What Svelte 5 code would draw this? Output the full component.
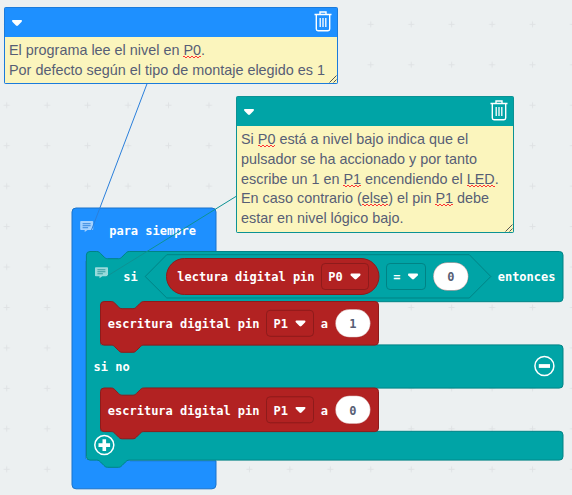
<script>
  const notch = 'c1.8 0 2.7 .9 3.6 1.8l3.6 3.6c.9 .9 1.8 1.8 3.6 1.8h10.8c1.8 0 2.7 -.9 3.6 -1.8l3.6 -3.6c.9 -.9 1.8 -1.8 3.6 -1.8';
  const tab = 'c-1.8 0 -2.7 .9 -3.6 1.8l-3.6 3.6c-.9 .9 -1.8 1.8 -3.6 1.8h-10.8c-1.8 0 -2.7 -.9 -3.6 -1.8l-3.6 -3.6c-.9 -.9 -1.8 -1.8 -3.6 -1.8';

  const comments = [
    {
      id: 'loop',
      lines: [
        [['El programa lee el nivel en '], ['P0', true], ['.']],
        [['Por defecto según el tipo de montaje elegido es 1']]
      ]
    },
    {
      id: 'logic',
      lines: [
        [['Si '], ['P0', true], [' está a nivel bajo indica que el']],
        [['pulsador se ha accionado y por tanto']],
        [['escribe un 1 en '], ['P1', true], [' encendiendo el '], ['LED', true], ['.']],
        [['En caso contrario ('], ['else', true], [') el pin '], ['P1', true], [' debe']],
        [['estar en nivel lógico bajo.']]
      ]
    }
  ];

  const writes = [
    { y: 301.5, value: '1' },
    { y: 388, value: '0' }
  ];
</script>

{#snippet caret(x, y)}
  <path class="caret" d="M{x - .3} {y}h8.2q1.6 .3 .6 1.8l-3.7 3.7q-1 .9 -2 0l-3.7 -3.7q-1 -1.5 .6 -1.8z" />
{/snippet}

{#snippet note(x, y, line)}
  <g transform="translate({x} {y})">
    <path fill="#fff" fill-opacity=".6" d="M.8 0h11.4q.8 0 .8 .8v7.4q0 .8 -.8 .8h-4.9l-2.8 2v-2h-3.7q-.8 0 -.8 -.8v-7.4q0 -.8 .8 -.8z" />
    <path stroke={line} stroke-width="1.1" opacity=".65" d="M2.4 2.6h8M2.4 4.6h8M2.4 6.6h5.5" />
  </g>
{/snippet}

<main>
  <svg class="canvas" width="572" height="495" viewBox="0 0 572 495">
    <defs>
      <pattern id="grid" x="-13.5" y="4.1" width="40.45" height="40.45" patternUnits="userSpaceOnUse">
        <path d="M17.2 20.2h6M20.2 17.2v6" stroke="#dfe2e4" stroke-width="1" />
      </pattern>
    </defs>
    <rect width="572" height="495" fill="url(#grid)" />

    <path class="blue" d="M72 212q0 -4 4 -4h136q4 0 4 4v39.5h-130v209.3h130v24q0 4 -4 4h-136q-4 0 -4 -4z" />
    <path class="blue-fill" d="M84 251h46v10h-46zM84 459h46v10h-46z" />
    <text x="109.2" y="234.7">para siempre</text>

    <path
      class="teal"
      d="M86.4 255.1q0 -3.6 3.6 -3.6h6.8{notch}H559.4q3.6 0 3.6 3.6v43q0 3.6 -3.6 3.6H100.5v43.2H559.4q3.6 0 3.6 3.6v36q0 3.6 -3.6 3.6H100.5v43.2H559.4q3.6 0 3.6 3.6v21.6q0 3.6 -3.6 3.6H129.2{tab}H90q-3.6 0 -3.6 -3.6z"
    />
    <path class="teal" d="M145.2 276.5L166.8 254.7H469.3L490.8 276.5L469.3 298H166.8z" />
    <text x="123.3" y="281">si</text>
    <text x="497.7" y="281">entonces</text>
    <text x="93.6" y="371">si no</text>

    <rect class="red" x="166.5" y="258.5" width="212.5" height="36" rx="18" />
    <text x="177.3" y="281">lectura digital pin</text>
    <rect class="red" x="321.5" y="263.5" width="47" height="26" rx="3.6" />
    <text x="328.3" y="281">P0</text>
    {@render caret(351.7, 273.6)}
    <rect class="teal" x="386.5" y="263.5" width="39" height="26" rx="3.6" />
    <text x="393.3" y="281">=</text>
    {@render caret(409.2, 273.6)}
    <rect class="value" x="433.3" y="262.5" width="35" height="28" rx="14" />
    <text class="number" x="447.2" y="281">0</text>

    {#each writes as block}
      <g transform="translate(100.5 {block.y})">
        <rect class="teal-fill" x="-1" y="-1" width="46" height="10" />
        <path class="red" d="M0 3.6q0 -3.6 3.6 -3.6h7.2{notch}H274.4q3.6 0 3.6 3.6v36.4q0 3.6 -3.6 3.6H43.2{tab}H3.6q-3.6 0 -3.6 -3.6z" />
        <text x="7.3" y="26.5">escritura digital pin</text>
        <rect class="red" x="166" y="8.8" width="47" height="26" rx="3.6" />
        <text x="173" y="26.5">P1</text>
        {@render caret(196.2, 19)}
        <text x="220.2" y="26.5">a</text>
        <rect class="value" x="234.9" y="7.8" width="35" height="28" rx="14" />
        <text class="number" x="248.8" y="26.5">{block.value}</text>
      </g>
    {/each}

    <g fill="none" stroke="#fff">
      <circle cx="104.3" cy="445.1" r="9.5" stroke-width="1.5" />
      <path stroke-width="3.6" d="M98.5 445.1h11.6M104.3 439.3v11.6" />
      <circle cx="544.4" cy="366" r="9.5" stroke-width="1.5" />
      <path stroke-width="3.8" d="M538.8 366h11.2" />
    </g>

    {@render note(80.2, 221, '#1e78d8')}
    {@render note(95, 267.2, '#007f82')}
    <path class="link" stroke="#2a7fdb" d="M147.3 83L91.5 230" />
    <path class="link" stroke="#0d9293" d="M237 195.8L106.5 276.5" />
  </svg>

  {#each comments as comment}
    <section class="comment {comment.id}">
      <header>
        <svg width="12" height="8" viewBox="0 0 12 8">{@render caret(2.2, 1)}</svg>
        <svg width="18" height="21" viewBox="0 0 18 21" fill="none" stroke="#fff">
          <path stroke-width="1.4" d="M.5 3.5h17M6 3.2v-2.2h6v2.2M2.3 3.8v14.2q0 1.7 1.7 1.7h10q1.7 0 1.7 -1.7v-14.2" />
          <path stroke-width="1.3" d="M6.2 7v9M9 7v9M11.8 7v9" />
        </svg>
      </header>
      <div class="body">
        {#each comment.lines as line}
          <p>{#each line as [part, misspelt]}<span class:misspelt>{part}</span>{/each}</p>
        {/each}
        <svg class="grip" width="8" height="8" viewBox="0 0 8 8">
          <path stroke="#555" stroke-width="1" d="M.5 7.5l7 -7M4.5 7.5l3 -3" />
        </svg>
      </div>
    </section>
  {/each}
</main>

<style>
  :global(body) {
    margin: 0;
    background: #ecf0f1;
  }
  main {
    position: relative;
    width: 572px;
    height: 495px;
    overflow: hidden;
    background: #ecf0f1;
  }
  .canvas {
    display: block;
  }
  text {
    font: bold 12px 'DejaVu Sans Mono', monospace;
    fill: #fff;
    white-space: pre;
  }
  .number {
    fill: #575e75;
  }
  .blue {
    fill: #1e90ff;
    stroke: #1873cc;
  }
  .blue-fill {
    fill: #1e90ff;
  }
  .teal {
    fill: #00a4a6;
    stroke: #008385;
  }
  .teal-fill {
    fill: #00a4a6;
  }
  .red {
    fill: #b22222;
    stroke: #8e1b1b;
  }
  .value,
  .caret {
    fill: #fff;
  }
  .value {
    stroke: #8e1b1b;
    stroke-opacity: 0.25;
  }
  .link {
    stroke-width: 1;
  }
  .comment {
    position: absolute;
    box-sizing: border-box;
    display: flex;
    flex-direction: column;
    border: 1px solid var(--edge);
    border-radius: 1.5px;
    background: var(--fill);
  }
  .loop {
    --fill: #1e90ff;
    --edge: #1b7bdb;
    left: 4px;
    top: 7px;
    width: 334px;
    height: 77px;
  }
  .logic {
    --fill: #00a4a6;
    --edge: #0b9294;
    left: 236px;
    top: 96px;
    width: 278px;
    height: 137px;
  }
  header {
    display: flex;
    justify-content: space-between;
    align-items: flex-start;
    height: 29px;
    padding: 3px 5.5px 0 6px;
    box-sizing: border-box;
  }
  header svg:first-child {
    margin-top: 8px;
  }
  .body {
    position: relative;
    flex: 1;
    padding: 4px 4px 0 4px;
    background: #fbf5bd;
    color: #575e75;
    font: 14.4px 'Liberation Sans', Arial, sans-serif;
  }
  p {
    margin: 0;
    line-height: 19.8px;
    white-space: pre;
  }
  .misspelt {
    background:
      linear-gradient(90deg, #f33 2px, transparent 2px) 0 14px / 4px 1px repeat-x,
      linear-gradient(90deg, #f33 2px, transparent 2px) 2px 15px / 4px 1px repeat-x;
  }
  .grip {
    position: absolute;
    right: 0;
    bottom: 0;
  }
</style>
